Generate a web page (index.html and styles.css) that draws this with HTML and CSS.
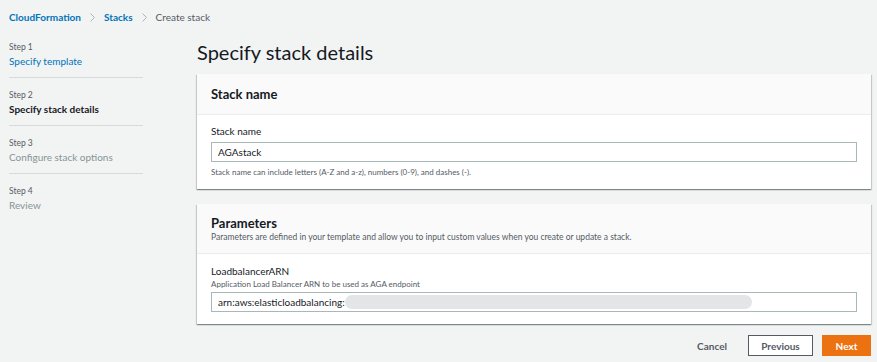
FILE: index.html
```html
<!DOCTYPE html>
<html>
<head>
    <link rel="stylesheet" href="styles.css">
</head>
<body>
    <div class="breadcrumbs">
        <a href="#">CloudFormation</a>
        <svg class="sep" width="5" height="9" viewBox="0 0 5 9"><path d="M0.5 0.5 L4.5 4.5 L0.5 8.5" fill="none" stroke="#aab7b8" stroke-width="1"/></svg>
        <a href="#">Stacks</a>
        <svg class="sep" width="5" height="9" viewBox="0 0 5 9"><path d="M0.5 0.5 L4.5 4.5 L0.5 8.5" fill="none" stroke="#aab7b8" stroke-width="1"/></svg>
        <span class="current">Create stack</span>
    </div>

    <div class="layout">
        <ul class="steps">
            <li>
                <div class="step-num">Step 1</div>
                <a href="#" class="step-title link">Specify template</a>
            </li>
            <li>
                <div class="step-num">Step 2</div>
                <div class="step-title active">Specify stack details</div>
            </li>
            <li>
                <div class="step-num">Step 3</div>
                <div class="step-title disabled">Configure stack options</div>
            </li>
            <li class="last">
                <div class="step-num">Step 4</div>
                <div class="step-title disabled">Review</div>
            </li>
        </ul>

        <div class="main">
            <h1>Specify stack details</h1>

            <div class="card">
                <div class="card-header">
                    <h2>Stack name</h2>
                </div>
                <div class="card-body">
                    <label class="field-label">Stack name</label>
                    <div class="input">AGAstack</div>
                    <div class="hint">Stack name can include letters (A-Z and a-z), numbers (0-9), and dashes (-).</div>
                </div>
            </div>

            <div class="card">
                <div class="card-header params">
                    <h2>Parameters</h2>
                    <div class="desc">Parameters are defined in your template and allow you to input custom values when you create or update a stack.</div>
                </div>
                <div class="card-body params">
                    <label class="field-label">LoadbalancerARN</label>
                    <div class="field-desc">Application Load Balancer ARN to be used as AGA endpoint</div>
                    <div class="input">arn:aws:elasticloadbalancing:<span class="redacted"></span></div>
                </div>
            </div>

            <div class="actions">
                <button class="btn-link">Cancel</button>
                <button class="btn-normal">Previous</button>
                <button class="btn-primary">Next</button>
            </div>
        </div>
    </div>
</body>
</html>
```

FILE: styles.css
```css
body {
    margin: 0;
    background-color: #f2f3f3;
    font-family: Lato, "Noto Sans", sans-serif;
    color: #16191f;
    height: 362px;
    overflow: hidden;
}

a {
    color: #0073bb;
    text-decoration: none;
}

.breadcrumbs {
    display: flex;
    align-items: center;
    height: 14px;
    padding: 10px 9px 6px;
    font-size: 10px;
    line-height: 14px;
    font-weight: bold;
}

.breadcrumbs .sep {
    margin: 0 9px;
}

.breadcrumbs .current {
    color: #545b64;
    font-weight: normal;
}

.layout {
    display: flex;
}

.steps {
    list-style: none;
    margin: 0 0 0 9px;
    padding: 0;
    width: 134px;
}

.steps li {
    padding: 11px 0 8px;
    border-bottom: 1px solid #d5dbdb;
}

.steps li.last {
    border-bottom: none;
}

.step-num {
    font-size: 8.5px;
    line-height: 12px;
    color: #545b64;
}

.step-title {
    display: block;
    font-size: 10px;
    line-height: 16px;
}

.step-title.active {
    font-weight: bold;
}

.step-title.disabled {
    color: #879596;
}

.main {
    margin-left: 54px;
    width: 674px;
}

h1 {
    margin: 0;
    padding-top: 10px;
    margin-bottom: 10px;
    font-size: 20px;
    line-height: 24px;
    font-weight: normal;
}

.card {
    background-color: white;
    box-shadow: 0 1px 1px 0 rgba(0,28,36,0.3), 1px 1px 1px 0 rgba(0,28,36,0.15), -1px 1px 1px 0 rgba(0,28,36,0.15);
    margin-bottom: 15px;
}

.card-header {
    background-color: #fafafa;
    border-bottom: 1px solid #eaeded;
    padding: 13px 14px;
}

.card-header.params {
    padding: 12px 14px 10px;
}

h2 {
    margin: 0;
    font-size: 13px;
    line-height: 14px;
    font-weight: bold;
}

.desc {
    margin-top: 1px;
    font-size: 8.5px;
    line-height: 12px;
    color: #545b64;
}

.card-body {
    padding: 9px 14px 11px;
}

.card-body.params {
    padding: 10px 14px 12px;
}

.field-label {
    display: block;
    font-size: 10px;
    line-height: 14px;
}

.field-desc {
    font-size: 8px;
    line-height: 12px;
    color: #545b64;
}

.input {
    margin-top: 4px;
    height: 18px;
    border: 1px solid #aab7b8;
    padding: 0 6px;
    font-size: 10px;
    line-height: 18px;
    display: flex;
    align-items: center;
}

.card-body.params .input {
    margin-top: 2px;
}

.redacted {
    display: inline-block;
    width: 407px;
    height: 14px;
    border-radius: 7px;
    background-color: #e3e5e6;
    filter: blur(0.6px);
}

.hint {
    margin-top: 4px;
    font-size: 8px;
    line-height: 12px;
    color: #545b64;
}

.actions {
    display: flex;
    justify-content: flex-end;
    align-items: center;
    gap: 9px;
    margin-top: -4px;
}

.actions button {
    font-family: Lato, "Noto Sans", sans-serif;
    font-size: 10px;
    font-weight: bold;
    height: 21px;
    cursor: pointer;
}

.btn-link {
    background: none;
    border: none;
    color: #545b64;
    padding: 0 12px;
}

.btn-normal {
    background-color: white;
    border: 1px solid #545b64;
    color: #545b64;
    width: 65px;
}

.btn-primary {
    background-color: #ec7211;
    border: 1px solid #ec7211;
    color: white;
    width: 49px;
}
```
